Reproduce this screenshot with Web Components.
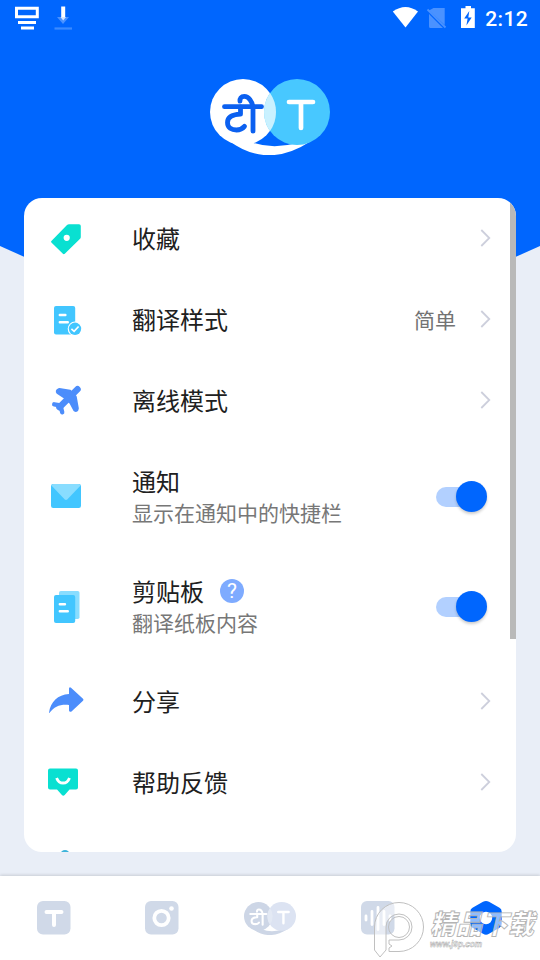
<!DOCTYPE html>
<html lang="zh-CN">
<head>
<meta charset="utf-8">
<title>设置</title>
<style>
html,body{margin:0;height:100%;overflow:hidden;background:#e9eef7}
body{font-family:Roboto,"Noto Sans CJK SC",sans-serif}
</style>
</head>
<body>
<translator-settings></translator-settings>
<script>
const define=(name,html,setup)=>{
  const tpl=document.createElement('template');
  tpl.innerHTML='<style>*{box-sizing:border-box}svg{display:block}</style>'+html;
  customElements.define(name,class extends HTMLElement{
    constructor(){
      super();
      this.attachShadow({mode:'open'}).append(tpl.content.cloneNode(true));
    }
    connectedCallback(){ if(setup) setup(this,this.shadowRoot); }
  });
};

/* Icons are drawn in a 36px box centred in the leading column. */
const icons={
  tag:`<path d="M3.4 20 19 4q.9-.8 2-.8h10q1.8.1 1.8 1.8V16q0 1-.7 1.8L16.8 32.8q-1 .8-1.9 0L3.4 21.6q-.8-.8 0-1.6Z" fill="#09e0d1"/><circle cx="18.7" cy="16.8" r="3.1" fill="#fff"/>`,
  style:`<rect x="6" y="4" width="21.2" height="28.5" rx="2" fill="#42c6ff"/><path d="M11.8 13h5.6M11.8 20.2h8" stroke="#fff" stroke-width="2.4" stroke-linecap="round"/><circle cx="27" cy="26.8" r="7.3" fill="#fff"/><circle cx="27" cy="26.8" r="6.2" fill="#42c6ff"/><path d="m23.4 26.8 2.7 2.5 4.5-4.8" fill="none" stroke="#fff" stroke-width="1.7"/>`,
  plane:`<g fill="#4c8dfb" stroke="#4c8dfb" stroke-linejoin="round" stroke-linecap="round"><path d="M29.5 6.2 11.5 24.2" stroke-width="6.5"/><path d="M22 8.6 11.2 6.8Q8.5 8 10.2 9.6L18.5 15 23 19.5 27 26.8Q28.6 28 29 25.4L27 14Z" stroke-width="3.6"/><path d="M6.2 21.3 12.5 22.5 14.2 29.3" stroke-width="4.4" fill="none"/></g>`,
  mail:`<rect x="3" y="6" width="30" height="24" rx="2.2" fill="#42c6ff"/><path d="M3.4 7.5q.4-1.5 2-1.5h25.2q1.6 0 2 1.5L19.2 21.6q-1.2.9-2.4 0Z" fill="#89ddff"/>`,
  clip:`<rect x="11" y="3" width="20.5" height="28" rx="1.8" fill="#89ddff"/><rect x="6" y="7" width="21.2" height="28" rx="2" fill="#42c6ff"/><path d="M11.9 16.2h5M11.9 23.2h7.8" stroke="#fff" stroke-width="2.6" stroke-linecap="round"/>`,
  share:`<path transform="translate(0 -1.8)" d="M1 30.5C2.5 19.4 9.8 12.5 21 11.7V6.2q.5-1.7 2-.7l12 11.1q1 1 0 2L23.5 29.2q-2 1.2-2.5-1v-5.5C11.7 22 6.6 24.1 1.4 30.8Z" fill="#4c8dfb"/>`,
  help:`<g transform="translate(0 -1.4)"><path d="M2 5h26q2 0 2 2v17q0 2-2 2h-6.5l-4.8 5.5q-1.4 1.3-2.8 0L9 26H2q-2 0-2-2V7q0-2 2-2Z" fill="#09e0d1"/><path d="M8.6 14.3c2.5 6.8 10.4 6.8 12.9 0" fill="none" stroke="#fff" stroke-width="2.8"/></g>`,
  more:`<ellipse cx="17" cy="8.2" rx="4.6" ry="4.2" fill="#3eb4da"/>`
};
define('menu-icon',`<style>:host{display:block;width:36px;height:36px}</style><svg width="36" height="36" overflow="visible"></svg>`,
  (h,r)=>{r.querySelector('svg').innerHTML=icons[h.getAttribute('name')];});

/* Bilingual mark: two discs joined by a smile-shaped arc. */
define('brand-logo',`<style>:host{display:block;width:120px;height:76px}</style>
<svg width="100%" height="100%" viewBox="0 0 120 76"><g></g></svg>`,(h,r)=>{
  const nav=h.hasAttribute('muted');
  const a=nav?'#cdd6e6':'#fff', b=nav?'#dce3f2':'#48c8ff', mix=nav?'#e3e9f4':'#c9f1ff', ink=nav?'#fff':'#0b60f0';
  r.querySelector('g').innerHTML=`
   <path d="M18 61Q57 91 101 62L87 64Q62 71 41 63Z" fill="${a}"/>
   <circle cx="33" cy="33" r="33" fill="${a}"/><circle cx="87" cy="33" r="33" fill="${b}"/>
   <path d="M60 14A33 33 0 0 1 60 52A33 33 0 0 1 60 14Z" fill="${mix}"/>
   <g fill="none" stroke="${ink}" stroke-width="4.8" stroke-linecap="round" stroke-linejoin="round"><path d="M14.5 27.7h37"/><path d="M30.5 28v7.2c-7 .3-13 2-13 8.3 0 5.5 4.3 7.5 9 7.5 5 0 8-3.6 8-3.6"/><path d="M43 28v24.2M43 28c-1-6-4.4-10.6-8.7-10.6-3.2 0-4.5 2.2-4.3 4.8"/></g>
   <path d="M79 23h24M91 23v26" fill="none" stroke="#fff" stroke-width="${nav?5.5:4.7}" stroke-linecap="round"/>`;
});

define('status-bar',`<style>:host{display:flex;height:36px;padding:0 12px 0 14px;align-items:center;justify-content:space-between;color:#fff}
 div{display:flex;align-items:center}span{font:500 21px/36px Roboto,sans-serif;letter-spacing:.35px;margin:1px 0 0 7.5px}</style>
<div><svg width="64" height="36" fill="none"><path d="M2.5 8.2h20.8v8.5H2.5z" stroke="#fff" stroke-width="3"/><path d="M4 22.4h18M7 28h13" stroke="#fff" stroke-width="3"/><path d="M43 17h12l-6 7z" fill="#4a92ff"/><path d="M49.2 6.5v11" stroke="#fff" stroke-width="4"/><path d="M46.5 17h5.5l-2.8 3.5z" fill="#d4e5ff"/><path d="M40.5 28.5H58" stroke="#3b8aff" stroke-width="2.2"/></svg></div>
<div><svg width="86" height="36"><path d="M.8 11.5Q13.5 2.5 26 11.5L13.5 27.5Z" fill="#fff"/><path d="M41.5 8h11.2v17L37 10.5ZM37 14l14 14H38.5q-1.5 0-1.5-1.5Z" fill="#4a92ff"/><path d="m35.5 9.5 18 18" stroke="#4a92ff" stroke-width="1.8"/><path d="M73.5 6h5.5v2.2h3.8V28H69V8.2h4.5Z" fill="#fff"/><path d="m77.3 11-5.1 7.5h3.4l-1.2 7 5.3-8h-3.4Z" fill="#0066fe"/></svg><span>2:12</span></div>`);

define('chevron-icon',`<style>:host{display:block;width:12px;height:20px}</style><svg width="12" height="20"><path d="m1.3 1 8 8-8 8" fill="none" stroke="#cdcfdc" stroke-width="1.8"/></svg>`);

define('toggle-switch',`<style>:host{display:flex;width:51px;height:34px;align-items:center;margin-right:5px}
 .track{width:42px;height:20px;border-radius:10px;background:#b2d0ff;margin:2px -22px 0 0;flex:none}
 .knob{width:31px;height:31px;border-radius:50%;background:#0066fe;box-shadow:0 2px 3px #0003;flex:none;z-index:1}</style>
<div class="track"></div><div class="knob"></div>`);

define('menu-row',`<style>:host{display:flex;height:81px;align-items:center;padding:0 24px}
 :host([tall]){height:110px}
 menu-icon{flex:none}
 .text{margin-left:48px;flex:1;padding-top:3px}
 .title{display:flex;align-items:center;font-size:24px;line-height:32px;color:#202020}
 .sub{font-size:21px;line-height:30px;color:#777}
 :host([tall]) .text{padding-top:4px}
 .value{font-size:21px;color:#737373;margin:-1px 24px 0 0}
 .q{width:24px;height:24px;border-radius:50%;background:#7eabff;color:#fff;font:400 21px/25px Roboto,sans-serif;text-align:center;margin:-4px 0 0 16px}
</style><div class="text"><div class="title"><span></span></div></div>`,(h,r)=>{
  const g=k=>h.getAttribute(k);
  const icon=document.createElement('menu-icon');
  icon.setAttribute('name',g('icon'));
  r.querySelector('.text').before(icon);
  r.querySelector('span').textContent=g('label');
  const add=(tag,cls,text,parent=r)=>{const e=document.createElement(tag);e.className=cls;e.textContent=text;parent.append(e);};
  if(h.hasAttribute('hint'))add('div','q','?',r.querySelector('.title'));
  if(g('sub'))add('div','sub',g('sub'),r.querySelector('.text'));
  if(g('value'))add('div','value',g('value'));
  add(h.hasAttribute('tall')?'toggle-switch':'chevron-icon','end','');
});

define('menu-card',`<style>:host{display:grid;grid-template-columns:1fr 6px;width:492px;height:654px;background:#fff;border-radius:18px;overflow:hidden}
 .list{grid-area:1/1/2/3;display:flex;flex-direction:column;min-height:0}::slotted(*){flex:none}
 .bar{grid-area:1/2;height:441px;background:#b9b9b9}</style>
<div class="list"><slot></slot></div><div class="bar"></div>`);

const nav={
 text:`<rect x="1" y="1" width="33.5" height="33.5" rx="6" fill="#d0d9e8"/><path d="M10.5 12h15M18 12v13" stroke="#fff" stroke-width="4" stroke-linecap="round"/>`,
 camera:`<rect x="1" y="1" width="33.5" height="33.5" rx="6" fill="#d0d9e8"/><circle cx="17.5" cy="18" r="7.2" fill="none" stroke="#fff" stroke-width="3.8"/><circle cx="27.5" cy="8.5" r="2.3" fill="#fff"/>`,
 voice:`<rect x="1" y="1" width="33.5" height="33.5" rx="6" fill="#d0d9e8"/><path d="M6 16v4M12 11.5v13M18 7.5v22M24 11.5v13M30 16v4" stroke="#fff" stroke-width="2.8" stroke-linecap="round"/>`,
 settings:`<path d="M15 1.8q3-1.8 6 0l10.5 6q2.2 1.2 2.2 4v12q0 2.7-2.2 4L21 33.8q-3 1.8-6 0l-10.5-6q-2.2-1.3-2.2-4v-12q0-2.8 2.2-4Z" fill="#0066fe"/><circle cx="18" cy="18" r="6.2" fill="#fff"/>`
};
define('nav-icon',`<style>:host{display:block;width:36px;height:36px}</style><svg width="36" height="36"></svg>`,
 (h,r)=>{r.querySelector('svg').innerHTML=nav[h.getAttribute('name')];});
define('bottom-nav',`<style>:host{display:grid;grid-template-columns:repeat(5,1fr);height:84px;background:#fff;box-shadow:0 -1px 3px #00000024;justify-items:center;align-items:center}
 brand-logo{width:52px;height:33px}</style>
<nav-icon name="text"></nav-icon><nav-icon name="camera"></nav-icon><brand-logo muted></brand-logo><nav-icon name="voice"></nav-icon><nav-icon name="settings"></nav-icon>`);

define('site-watermark',`<style>:host{display:block;width:170px;height:62px}text{font-style:italic;font-family:"Liberation Sans","Noto Sans CJK SC",sans-serif}</style>
<svg width="170" height="62" overflow="visible">
 <g fill="#ffffff80" stroke="#c0c0c0" stroke-width="1"><path fill-rule="evenodd" d="M4.5 52V29A24.5 24.5 0 1 1 29 53.5H19V50L22 48 19 46V42H29A13 13 0 1 0 16 29V52L10 59Z"/><circle cx="29" cy="29" r="10.5" fill="none"/></g>
 <g fill="#ffffff90" stroke="#b4b4b4" stroke-width=".9"><text x="60" y="36" font-size="27" font-weight="900" textLength="104" lengthAdjust="spacingAndGlyphs">精品下载</text>
 <text x="60" y="49" font-size="9" font-weight="700" fill="#fff" stroke="#aaa" stroke-width=".5" textLength="52" lengthAdjust="spacingAndGlyphs">www.j9p.com</text></g></svg>`);

define('translator-settings',`<style>
:host{display:flex;flex-direction:column;position:relative;width:540px;height:960px;background:#e9eef7;overflow:hidden}
:host::before{content:"";position:absolute;inset:0 0 auto;height:367px;background:#0066fe;clip-path:polygon(0 0,100% 0,100% 246px,50% 367px,0 246px)}
status-bar,brand-logo,menu-card,bottom-nav{position:relative;flex:none}
.logo{align-self:center;margin-top:43px}
menu-card{align-self:center;margin-top:43px}
bottom-nav{margin-top:auto}
site-watermark{position:absolute;left:370px;top:898px}
</style>
<status-bar></status-bar><brand-logo class="logo"></brand-logo>
<menu-card>
<menu-row icon="tag" label="收藏"></menu-row>
<menu-row icon="style" label="翻译样式" value="简单"></menu-row>
<menu-row icon="plane" label="离线模式"></menu-row>
<menu-row icon="mail" label="通知" sub="显示在通知中的快捷栏" tall></menu-row>
<menu-row icon="clip" label="剪贴板" sub="翻译纸板内容" tall hint></menu-row>
<menu-row icon="share" label="分享"></menu-row>
<menu-row icon="help" label="帮助反馈"></menu-row>
<menu-row icon="more" label=""></menu-row>
</menu-card>
<bottom-nav></bottom-nav><site-watermark></site-watermark>`);
</script>
</body>
</html>
